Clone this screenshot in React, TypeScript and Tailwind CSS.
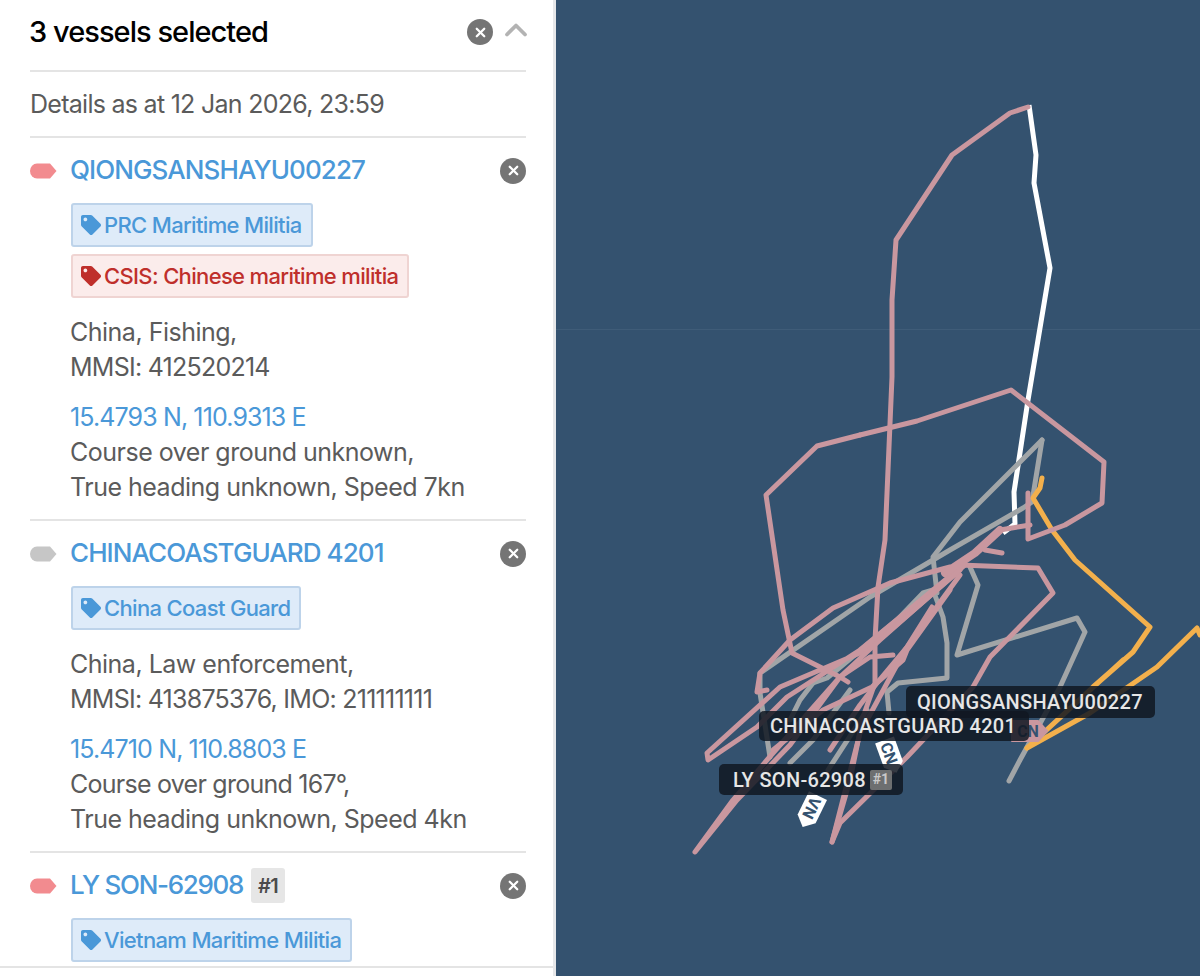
import { ChevronUp, X } from "lucide-react";
import { FaTag } from "react-icons/fa";

const PINK = "#c9979f";
const GREY = "#a1a5a7";
const ORANGE = "#f3b04c";

function CloseBtn() {
  return (
    <button className="flex h-[26px] w-[26px] items-center justify-center rounded-full bg-[#757575] text-white">
      <X size={15} strokeWidth={3.6} />
    </button>
  );
}

function Swatch({ color }: { color: string }) {
  return (
    <svg width="27" height="16" viewBox="0 0 27 16" className="shrink-0">
      <path d="M7 0.5H20L26.5 8L20 15.5H7A7 7.5 0 0 1 7 0.5Z" fill={color} />
    </svg>
  );
}

function Tag({ label, red }: { label: string; red?: boolean }) {
  return (
    <div
      className={`flex h-[44px] w-fit items-center gap-[3px] rounded-[3px] border-2 pl-[8px] pr-[9px] text-[22px] font-medium tracking-[-0.03em] ${
        red ? "border-[#efd4d2] bg-[#fbeceb] text-[#bf2f2b]" : "border-[#bdd3ea] bg-[#deebf9] text-[#4a98d8]"
      }`}
    >
      <FaTag size={20} className="shrink-0" />
      <span>{label}</span>
    </div>
  );
}

type Vessel = {
  name: string;
  nameClass: string;
  color: string;
  rank?: string;
  tags: { label: string; red?: boolean }[];
  info?: string[];
  coords?: string;
  motion?: { text: string; className: string }[];
};

const vessels: Vessel[] = [
  {
    name: "QIONGSANSHAYU00227",
    nameClass: "tracking-[-0.035em]",
    color: "#f28b8f",
    tags: [{ label: "PRC Maritime Militia" }, { label: "CSIS: Chinese maritime militia", red: true }],
    info: ["China, Fishing,", "MMSI: 412520214"],
    coords: "15.4793 N, 110.9313 E",
    motion: [
      { text: "Course over ground unknown,", className: "tracking-[-0.02em]" },
      { text: "True heading unknown, Speed 7kn", className: "tracking-[-0.02em]" },
    ],
  },
  {
    name: "CHINACOASTGUARD 4201",
    nameClass: "tracking-[-0.035em]",
    color: "#c6c6c6",
    tags: [{ label: "China Coast Guard" }],
    info: ["China, Law enforcement,", "MMSI: 413875376, IMO: 211111111"],
    coords: "15.4710 N, 110.8803 E",
    motion: [
      { text: "Course over ground 167°,", className: "tracking-[-0.03em]" },
      { text: "True heading unknown, Speed 4kn", className: "tracking-[-0.02em]" },
    ],
  },
  {
    name: "LY SON-62908",
    nameClass: "tracking-[-0.05em]",
    color: "#f28b8f",
    rank: "#1",
    tags: [{ label: "Vietnam Maritime Militia" }],
  },
];

function VesselRow({ v }: { v: Vessel }) {
  return (
    <section className="border-t-2 border-[#e4e4e4] pb-[14px]">
      <div className="flex h-[65px] items-center">
        <Swatch color={v.color} />
        <div className="ml-[13px] flex items-center gap-[8px]">
          <span className={`pb-[2px] text-[26px] font-medium text-[#4a98d8] ${v.nameClass}`}>{v.name}</span>
          {v.rank && (
            <span className="flex h-[35px] w-[34px] items-center justify-center rounded-[3px] bg-[#e6e6e6] text-[20px] font-semibold tracking-[-0.03em] text-[#4b4b4b]">
              {v.rank}
            </span>
          )}
        </div>
        <div className="ml-auto">
          <CloseBtn />
        </div>
      </div>
      <div className="ml-[40px]">
        <div className="flex flex-col gap-[7px] pl-[1px]">
          {v.tags.map((t) => (
            <Tag key={t.label} {...t} />
          ))}
        </div>
        {v.info && (
          <div className="mt-[17px] text-[25px] leading-[35px] text-[#5b5b5b]">
            {v.info.map((l) => (
              <p key={l} className="tracking-[-0.03em] first:tracking-[-0.02em]">
                {l}
              </p>
            ))}
            <p className="mt-[15px] tracking-[-0.035em] text-[#4a98d8]">{v.coords}</p>
            {v.motion?.map((l) => (
              <p key={l.text} className={l.className}>
                {l.text}
              </p>
            ))}
          </div>
        )}
      </div>
    </section>
  );
}

function MapCanvas() {
  return (
    <svg viewBox="556 0 644 976" className="absolute inset-0 h-full w-full" fill="none" strokeLinejoin="round" strokeLinecap="round">
      <line x1="556" y1="329.5" x2="1200" y2="329.5" stroke="#3f5c78" strokeWidth="1" />

      {/* white track */}
      <polyline stroke="#ffffff" strokeWidth="5" strokeLinecap="butt" points="1029,105 1036,155 1034,183 1050,268 1028,400 1014,492 1015,524 1003,533" />

      {/* grey tracks */}
      <g stroke={GREY} strokeWidth="5">
        <polyline points="1042,440 1032,502 1023,508 950,550 870,597 760,673 760,693 770,757" />
        <polyline points="1042,440 1000,482 960,522 933,557 937,593" />
        <polyline points="813,683 827,678 897,620 923,593 933,590 943,617 947,643 947,678 898,683 887,692 889,713" />
        <polyline points="970,567 978,585 957,655 1077,618 1085,632 1060,687 1020,760 1009,781" />
        <polyline points="813,683 800,700 790,720" />
        <polyline points="790,763 813,740 850,690" />
        <polyline points="828,770 867,710" />
      </g>

      {/* orange track */}
      <g stroke={ORANGE} strokeWidth="5">
        <polyline points="1042,478 1040,488 1033,498 1052,530 1075,560 1150,627 1133,652 1093,687 1027,748 1123,660" />
        <polyline points="1027,748 1090,713 1157,667 1197,628 1200,635" />
      </g>

      {/* pink tracks */}
      <g stroke={PINK} strokeWidth="5">
        <polyline points="1028,107 1010,113 952,155 896,240 892,300 892,377 888,470 885,540 878,587 875,640 875,683 863,717 850,780 832,842" />
        <polyline points="860,435 917,421 1011,390 1104,462 1102,503 1065,525 1028,539 1028,493" />
        <polyline points="860,435 817,446 766,495 783,610 792,653 840,677 848,682" />
        <polyline points="1030,525 1000,530 960,565 1038,568 1053,593 990,657 973,687 907,757 840,823 832,842 860,733 905,650 960,575" />
        <polyline points="950,567 890,583 833,608 790,640 760,673 757,692 767,690" />
        <polyline points="960,570 867,650 780,687 707,753 708,760 757,727 787,697 860,650 955,572" />
        <polyline points="965,565 880,640 840,677 773,753 733,800 695,852 737,800 790,745 840,677" />
        <polyline points="893,655 870,657 840,677" />
        <polyline points="950,590 907,650 903,660 872,687 823,710 773,750" />
        <polyline points="932,607 907,647 877,683 860,705 830,750" />
      </g>
      <polyline stroke={PINK} strokeWidth="8" points="1000,530 975,553 945,573" />
      <polyline stroke={PINK} strokeWidth="5" points="985,550 1002,553" />

      {/* vessel markers */}
      <g transform="translate(1030 731)">
        <path d="M-18 -10H8L17 0L8 10H-18Z" fill={PINK} stroke={PINK} strokeWidth="2" />
        <text x="-2" y="6" textAnchor="middle" fontFamily="Roboto, sans-serif" fontSize="16" fontWeight="700" fill="#34526f">CN</text>
      </g>
      <g transform="translate(890 755) rotate(70)">
        <path d="M-16 -10H10L19 0L10 10H-16Z" fill="#ffffff" />
        <text x="-2" y="6" textAnchor="middle" fontFamily="Roboto, sans-serif" fontSize="16" fontWeight="700" fill="#34526f">CN</text>
      </g>
      <g transform="translate(811 810) rotate(116)">
        <path d="M-16 -10H10L19 0L10 10H-16Z" fill="#ffffff" />
        <text x="-2" y="6" textAnchor="middle" fontFamily="Roboto, sans-serif" fontSize="16" fontWeight="700" fill="#34526f">VN</text>
      </g>
    </svg>
  );
}

function MapLabel({ text, rank, className }: { text: string; rank?: string; className: string }) {
  return (
    <div
      className={`absolute flex items-center rounded-[5px] bg-[#111822]/85 font-['Roboto',sans-serif] text-[20px] font-medium tracking-[0.015em] whitespace-nowrap text-[#e6e6e6] ${className}`}
    >
      {text}
      {rank && <span className="ml-[4px] flex h-[20px] w-[22px] items-center justify-center rounded-[2px] bg-[#6d6f70] text-[14px] font-bold tracking-normal text-[#c9c9c9]">{rank}</span>}
    </div>
  );
}

export default function App() {
  return (
    <div className="flex h-[976px] w-[1200px] overflow-hidden bg-white font-['Inter',sans-serif]">
      {/* Selection panel */}
      <aside className="flex h-full w-[556px] shrink-0 flex-col border-r-[3px] border-[#e6e7e9] bg-white">
        <div className="min-h-0 flex-1 overflow-hidden pl-[30px] pr-[27px]">
          <header className="flex h-[70px] items-center pb-[6px]">
            <h2 className="-ml-[1px] text-[29px] font-medium tracking-[-0.033em] text-black">3 vessels selected</h2>
            <div className="ml-auto flex items-center gap-[5px]">
              <CloseBtn />
              <ChevronUp size={36} strokeWidth={2.5} className="-mr-[8px] -mt-[4px] text-[#b3b3b3]" />
            </div>
          </header>
          <div className="flex h-[66px] items-center border-t-2 border-[#e4e4e4] pt-[1px] text-[25px] tracking-[-0.029em] text-[#5b5b5b]">
            Details as at 12 Jan 2026, 23:59
          </div>
          {vessels.map((v) => (
            <VesselRow key={v.name} v={v} />
          ))}
        </div>
        <div className="h-[10px] shrink-0 border-t-2 border-[#e4e4e4] bg-white" />
      </aside>

      {/* Track map */}
      <main className="relative flex-1 bg-[#34526f]">
        <MapCanvas />
        <MapLabel text="QIONGSANSHAYU00227" className="left-[350px] top-[686px] h-[32px] pl-[11px] pr-[12px]" />
        <MapLabel text="CHINACOASTGUARD 4201" className="left-[203px] top-[711px] h-[30px] pl-[11px] pr-[13px]" />
        <MapLabel text="LY SON-62908" rank="#1" className="left-[163px] top-[764px] h-[31px] pl-[14px] pr-[11px]" />
      </main>
    </div>
  );
}
